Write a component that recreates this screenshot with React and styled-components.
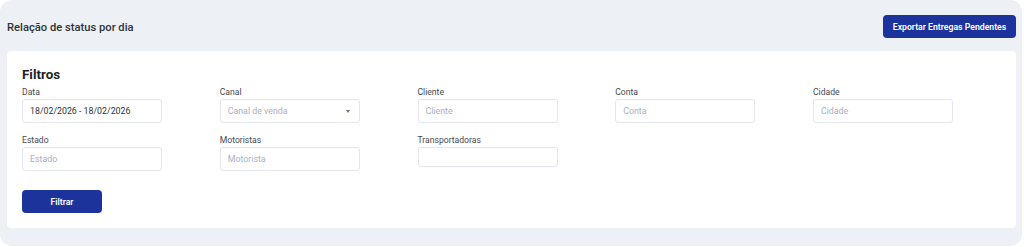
import React from "react";
import styled, { createGlobalStyle } from "styled-components";

const Global = createGlobalStyle`
  html, body { margin: 0; padding: 0; background: #ffffff; }
  body { font-family: Roboto, Inter, "Noto Sans", sans-serif; -webkit-font-smoothing: antialiased; }
  * { box-sizing: border-box; }
`;

const Frame = styled.div`
  width: 1022px;
  height: 246px;
  background: #edf0f5;
  border-radius: 12px;
  padding: 0 6px 0 7px;
  display: flex;
  flex-direction: column;
`;

const Header = styled.div`
  display: flex;
  align-items: center;
  justify-content: space-between;
  padding: 15px 0 13px;
`;

const Title = styled.h1`
  margin: 0;
  font-size: 11.2px;
  font-weight: 500;
  color: #2f3337;
  padding-top: 2px;
`;

const PrimaryButton = styled.button`
  height: 23px;
  width: ${(p) => p.$width}px;
  border: none;
  border-radius: 4px;
  background: #1b339b;
  color: #ffffff;
  font-family: inherit;
  font-size: 8.7px;
  font-weight: 600;
  padding: 0;
  cursor: pointer;
`;

const Card = styled.section`
  background: #ffffff;
  border-radius: 4px;
  padding: 14px 15px 15px;
  display: flex;
  flex-direction: column;
  align-items: flex-start;
`;

const CardTitle = styled.h2`
  margin: 0;
  font-size: 13.4px;
  line-height: 20px;
  font-weight: 700;
  color: #1f2328;
`;

const Grid = styled.div`
  display: grid;
  grid-template-columns: repeat(5, 197.75px);
  row-gap: 10px;
  margin-bottom: 19px;
`;

const Field = styled.div`
  display: flex;
  flex-direction: column;
  width: 140px;
`;

const Label = styled.label`
  font-size: 8.6px;
  line-height: 14px;
  color: #45494f;
`;

const Input = styled.input`
  width: 140px;
  height: ${(p) => (p.$short ? 20 : 24)}px;
  border: 1px solid #e3e6ee;
  border-radius: 3px;
  padding: 0 7px;
  font-family: inherit;
  font-size: 8.8px;
  color: #2f3337;
  background: #fff;
  outline: none;
  &::placeholder { color: #a9b0bf; }
`;

const SelectBox = styled.div`
  width: 140px;
  height: 24px;
  border: 1px solid #e3e6ee;
  border-radius: 3px;
  padding: 0 9px 0 7px;
  display: flex;
  align-items: center;
  justify-content: space-between;
  font-size: 8.8px;
  color: #a9b0bf;
`;

const Caret = styled.span`
  width: 0;
  height: 0;
  border-left: 2.5px solid transparent;
  border-right: 2.5px solid transparent;
  border-top: 3px solid #6b6f76;
`;

const fields = [
  { label: "Data", value: "18/02/2026 - 18/02/2026" },
  { label: "Canal", select: "Canal de venda" },
  { label: "Cliente", placeholder: "Cliente" },
  { label: "Conta", placeholder: "Conta" },
  { label: "Cidade", placeholder: "Cidade" },
  { label: "Estado", placeholder: "Estado" },
  { label: "Motoristas", placeholder: "Motorista" },
  { label: "Transportadoras", short: true },
];

export default function App() {
  return (
    <>
      <Global />
      <Frame>
        <Header>
          <Title>Relação de status por dia</Title>
          <PrimaryButton $width={133}>Exportar Entregas Pendentes</PrimaryButton>
        </Header>
        <Card>
          <CardTitle>Filtros</CardTitle>
          <Grid>
            {fields.map((f) => (
              <Field key={f.label}>
                <Label>{f.label}</Label>
                {f.select ? (
                  <SelectBox>
                    <span>{f.select}</span>
                    <Caret />
                  </SelectBox>
                ) : (
                  <Input
                    $short={f.short}
                    placeholder={f.placeholder}
                    defaultValue={f.value}
                  />
                )}
              </Field>
            ))}
          </Grid>
          <PrimaryButton $width={80}>Filtrar</PrimaryButton>
        </Card>
      </Frame>
    </>
  );
}
